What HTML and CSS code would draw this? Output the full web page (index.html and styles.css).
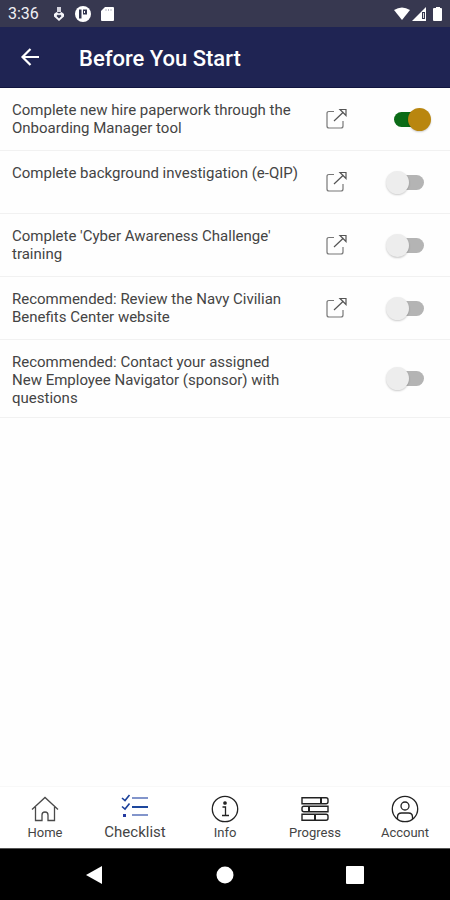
FILE: index.html
```html
<!DOCTYPE html>
<html lang="en">
<head>
<meta charset="utf-8">
<meta name="viewport" content="width=device-width, initial-scale=1">
<title>Before You Start</title>
<link rel="stylesheet" href="styles.css">
</head>
<body>
<svg class="defs" aria-hidden="true">
  <symbol id="external" viewBox="0 0 22 22">
    <path d="M8 3.500H3Q1 3.500 1 5.500V18Q1 20 3 20H15Q17 20 17 18V13" fill="none" stroke="#777" stroke-width="1.200"/>
    <path d="M8 13L17.500 4M14 1.500H20V7.500L17.500 5z" fill="none" stroke="#555" stroke-width="1.200"/>
  </symbol>
</svg>
<div class="status">
  <span class="clock">3:36</span>
  <svg width="12" height="16" viewBox="0 0 12 16"><path d="M4 1h4v5H4z" fill="#d5d5df"/><path d="M1 8l2.500-2L6 7.500 8.500 6 11 8v2.500L6 15 1 10.500z" fill="#f5f5fa"/><path d="M6 12.500L3.500 10 5 8.500l1 1 1-1L8.500 10z" fill="#343750"/></svg>
  <svg width="16" height="16" viewBox="0 0 16 16"><circle cx="8" cy="8" r="8" fill="#fff"/><path d="M4 3.500h2.500v9H4zM8 3.500h4v5H8z" fill="#343750"/><path d="M9.500 5v2" stroke="#fff"/></svg>
  <svg width="13" height="16" viewBox="0 0 13 16"><path d="M4 1h8q1 0 1 1v12q0 1-1 1H1q-1 0-1-1V5z" fill="#fff"/><path d="M5 3v2M7.500 3v2M10 3v2" stroke="#b9bac6"/></svg>
  <span class="grow"></span>
  <svg width="50" height="16" viewBox="0 0 50 16"><path d="M0 4Q8-1 16 4L8 14z" fill="#fff"/><path d="M32 1v14H18z" fill="#fff"/><path d="M28 6h3v7h-3z" fill="#343750"/><path d="M29.500 7v5" stroke="#ddd"/><path d="M42 1h4v1h1q1 0 1 1v11q0 1-1 1h-7q-1 0-1-1V3q0-1 1-1h2z" fill="#fff"/></svg>
</div>
<header class="bar">
  <button class="back" aria-label="Back"><svg width="20" height="20" viewBox="0 0 20 20"><path d="M10.500 2L2.500 10l8 8M2.500 10H19" fill="none" stroke="#fff" stroke-width="2.200"/></svg></button>
  <h1>Before You Start</h1>
</header>
<main>
  <ul class="tasks">
    <li><label for="t1">Complete new hire paperwork through the Onboarding Manager tool</label><a href="#paperwork" aria-label="Open Onboarding Manager"><svg width="22" height="22"><use href="#external"/></svg></a><input id="t1" type="checkbox" role="switch" checked></li>
    <li><label for="t2">Complete background investigation (e-QIP)</label><a href="#eqip" aria-label="Open e-QIP"><svg width="22" height="22"><use href="#external"/></svg></a><input id="t2" type="checkbox" role="switch"></li>
    <li><label for="t3">Complete 'Cyber Awareness Challenge' training</label><a href="#cyber" aria-label="Open training"><svg width="22" height="22"><use href="#external"/></svg></a><input id="t3" type="checkbox" role="switch"></li>
    <li><label for="t4">Recommended: Review the Navy Civilian Benefits Center website</label><a href="#benefits" aria-label="Open benefits website"><svg width="22" height="22"><use href="#external"/></svg></a><input id="t4" type="checkbox" role="switch"></li>
    <li><label for="t5">Recommended: Contact your assigned New Employee Navigator (sponsor) with questions</label><span></span><input id="t5" type="checkbox" role="switch"></li>
  </ul>
</main>
<nav class="tabs">
  <a href="#home"><svg width="28" height="28" viewBox="0 0 28 28" fill="none" stroke="#4a4a4a" stroke-width="1.300"><path d="M1 14.500L14 2.500l13 12M4.500 12v13.500H11V20q0-3 3-3t3 3v5.500h6.500V12"/></svg>Home</a>
  <a href="#checklist" class="active" aria-current="page"><svg width="28" height="28" viewBox="0 0 28 28" fill="none"><path d="M11 6h16M11 23h16" stroke="#8295cb" stroke-width="2"/><path d="M11 15h16" stroke="#1d479d" stroke-width="2"/><path d="M1 6l3 2.500L8.500 3M1 14.500L4 17l4.500-5.500" stroke="#1b409a" stroke-width="1.600"/><path d="M2 22h3v3H2z" fill="#2339a0"/></svg>Checklist</a>
  <a href="#info"><svg width="28" height="28" viewBox="0 0 28 28" fill="none" stroke="#222" stroke-width="1.300"><circle cx="14" cy="14" r="12.700"/><path d="M11.500 12H14.500V20M11 20.500h7"/><circle cx="14" cy="8" r="1.200" fill="#222"/></svg>Info</a>
  <a href="#progress"><svg width="28" height="28" viewBox="0 0 28 28" fill="none" stroke="#222" stroke-width="1.400"><path d="M1 2.700h24q2 0 2 2v2q0 2-2 2H1zM27 11.200H3q-2 0-2 2v1.500q0 2 2 2h24zM1 19.300h24q2 0 2 2v2q0 2-2 2H1z"/><path d="M20 3v5.500M8 11.500v5M14 19.500v5.500" stroke-width="2"/></svg>Progress</a>
  <a href="#account"><svg width="28" height="28" viewBox="0 0 28 28" fill="none" stroke="#222" stroke-width="1.300"><circle cx="14" cy="14" r="12.700"/><circle cx="14" cy="11" r="4"/><path d="M6.500 24v-2q0-4 4-4h7q4 0 4 4v2"/></svg>Account</a>
</nav>
<div class="system">
  <button aria-label="Back"><svg width="18" height="18" viewBox="0 0 18 18"><path d="M16 0v18L0 9z" fill="#fff"/></svg></button>
  <button aria-label="Home"><svg width="18" height="18" viewBox="0 0 18 18"><circle cx="9" cy="9" r="8.500" fill="#fff"/></svg></button>
  <button aria-label="Recent apps"><svg width="18" height="18" viewBox="0 0 18 18"><rect width="18" height="18" rx="1" fill="#fff"/></svg></button>
</div>
</body>
</html>
```
FILE: styles.css
```css
* { box-sizing: border-box; }
body {
  margin: 0;
  min-height: 100vh;
  display: flex;
  flex-direction: column;
  background: #fefefe;
  color: #444;
  font-family: Roboto, "Liberation Sans", sans-serif;
}
.defs { position: absolute; width: 0; height: 0; }
button { border: 0; padding: 0; background: none; }
svg { display: block; }
.status {
  display: flex;
  align-items: center;
  gap: 10px;
  height: 27px;
  padding: 0 6px 0 8px;
  background: #373850;
  color: #f0f0f5;
}
.clock { font-size: 16px; margin-right: 4px; }
.grow { flex: 1; }
.bar {
  display: flex;
  align-items: center;
  height: 61px;
  padding: 0 20px;
  gap: 39px;
  background: #1f2453;
  border-bottom: 1px solid #11153f;
  color: #fff;
}
.bar h1 { margin: 2px 0 0; font-size: 22px; font-weight: 500; }
main { flex: 1; }
.tasks { list-style: none; margin: 0; padding: 0; }
.tasks li {
  display: grid;
  grid-template-columns: 1fr 22px 30px;
  align-items: center;
  min-height: 63px;
  padding: 0 26px 0 12px;
  border-bottom: 1px solid #f1f1f1;
  column-gap: 46px;
}
.tasks label {
  align-self: start;
  padding: 13px 0 10px;
  margin-right: -20px;
  font-size: 15px;
  line-height: 18px;
}
.tasks input {
  appearance: none;
  position: relative;
  width: 30px;
  height: 15px;
  margin: 0;
  border-radius: 8px;
  background: #b4b4b4;
}
.tasks input::before {
  content: "";
  position: absolute;
  top: -4px;
  left: -8px;
  width: 23px;
  height: 23px;
  border-radius: 50%;
  background: #ededed;
  box-shadow: 0 1px 2px #0003;
}
.tasks input:checked { background: #0b6b17; }
.tasks input:checked::before { left: 14px; background: #b9860f; }
.tabs {
  display: grid;
  grid-template-columns: repeat(5, 1fr);
  height: 62px;
  border-top: 1px solid #f8f8f8;
  background: #fff;
}
.tabs a {
  display: flex;
  flex-direction: column;
  align-items: center;
  padding-top: 8px;
  gap: 2px;
  color: #444;
  font-size: 13px;
  line-height: 16px;
  text-decoration: none;
}
.tabs .active { padding-top: 5px; gap: 4px; font-size: 15px; }
.system {
  display: flex;
  justify-content: center;
  align-items: center;
  gap: 112px;
  height: 52px;
  background: #000;
  border-top: 1px solid #555;
}
```
